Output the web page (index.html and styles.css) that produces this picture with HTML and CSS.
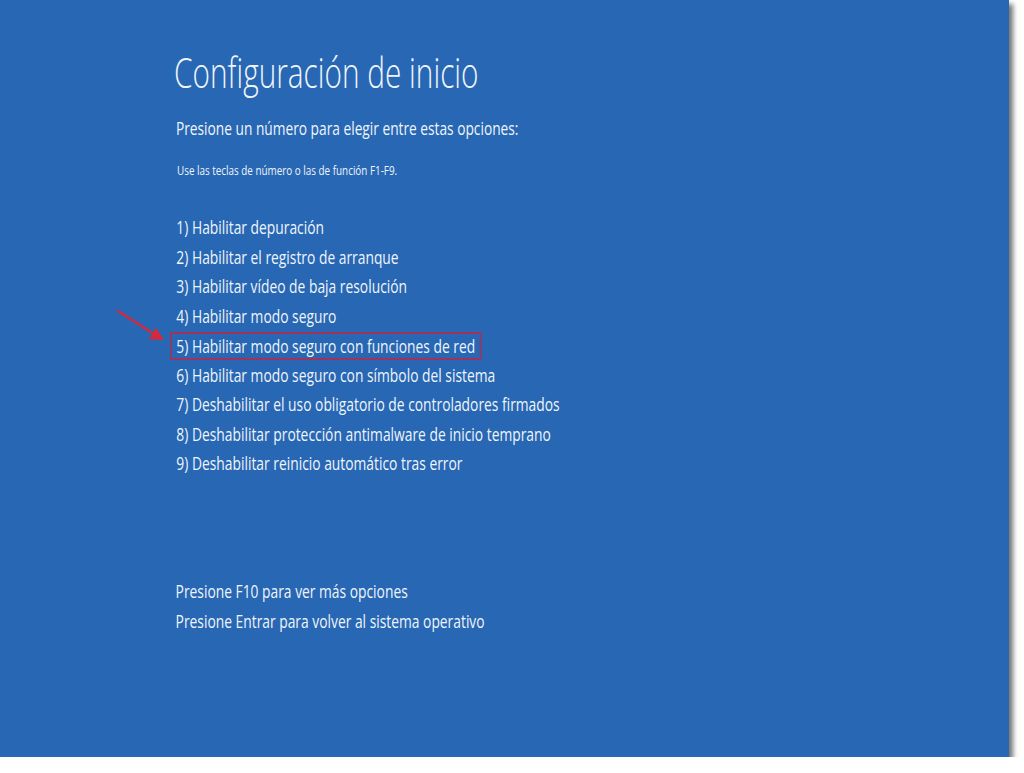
FILE: index.html
```html
<!DOCTYPE html>
<html lang="es">
<head>
<meta charset="utf-8">
<title>Configuración de inicio</title>
<link rel="stylesheet" href="styles.css">
</head>
<body>
<div class="frame">
  <div class="content">
    <h1 class="title">Configuración de inicio</h1>
    <p class="lead">Presione un número para elegir entre estas opciones:</p>
    <p class="hint">Use las teclas de número o las de función F1-F9.</p>
    <ul class="options">
      <li>1) Habilitar depuración</li>
      <li>2) Habilitar el registro de arranque</li>
      <li>3) Habilitar vídeo de baja resolución</li>
      <li>4) Habilitar modo seguro</li>
      <li><span class="selected">5) Habilitar modo seguro con funciones de red</span></li>
      <li>6) Habilitar modo seguro con símbolo del sistema</li>
      <li>7) Deshabilitar el uso obligatorio de controladores firmados</li>
      <li>8) Deshabilitar protección antimalware de inicio temprano</li>
      <li>9) Deshabilitar reinicio automático tras error</li>
    </ul>
    <ul class="footer">
      <li>Presione F10 para ver más opciones</li>
      <li>Presione Entrar para volver al sistema operativo</li>
    </ul>
  </div>
  <svg class="arrow" width="60" height="40" viewBox="0 0 60 40">
    <line x1="2" y1="1" x2="38" y2="24" stroke="#d8283a" stroke-width="2.2" stroke-linecap="round"/>
    <polygon points="48,30 33,29 40,18" fill="#d8283a"/>
  </svg>
</div>
</body>
</html>
```

FILE: styles.css
```css
html, body {
  margin: 0;
  padding: 0;
  background: #ffffff;
}
.frame {
  position: relative;
  width: 1009px;
  height: 757px;
  background: #2767b3;
  box-shadow: 4px 4px 5px rgba(0, 0, 0, 0.55);
}
.content {
  padding: 44px 0 0 174px;
  color: #f0f5fb;
  font-family: "Open Sans", "Noto Sans", sans-serif;
}
.title, .lead, .hint, .options li, .footer li {
  transform-origin: 0 50%;
}
.title {
  margin: 0;
  font-size: 42px;
  font-weight: 300;
  line-height: 56px;
  transform: scaleX(0.709);
}
.lead {
  margin: 16px 0 0 2px;
  font-size: 18.5px;
  line-height: 24px;
  transform: scaleX(0.742);
}
.hint {
  margin: 23px 0 0 3px;
  font-size: 12.5px;
  line-height: 16px;
  transform: scaleX(0.79);
}
.options, .footer {
  list-style: none;
  margin: 34px 0 0 0;
  padding: 0;
}
.options li, .footer li {
  font-size: 17.5px;
  line-height: 29.5px;
  height: 29.5px;
  padding-left: 3px;
  transform: scaleX(0.79);
}
.selected {
  display: inline-block;
  margin-left: -8px;
  padding: 0 6px 0 6px;
  height: 24px;
  line-height: 24px;
  border: 2px solid #a3325a;
  vertical-align: top;
  margin-top: 1px;
}
.footer {
  margin-top: 97px;
}
.footer li {
  padding-left: 2px;
  height: 30px;
  line-height: 30px;
}
.arrow {
  position: absolute;
  left: 116px;
  top: 310px;
}
```
